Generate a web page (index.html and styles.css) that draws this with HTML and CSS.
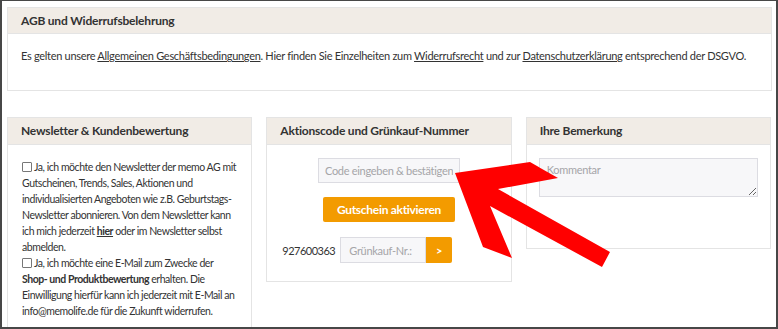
FILE: index.html
```html
<!DOCTYPE html>
<html lang="de">
<head>
  <meta charset="UTF-8">
  <title>Checkout – AGB und Bemerkungen</title>
  <link rel="stylesheet" href="styles.css">
</head>
<body>
  <div class="frame">

    <!-- AGB -->
    <div class="box box-wide">
      <div class="box-head">AGB und Widerrufsbelehrung</div>
      <div class="box-body agb-body">
        Es gelten unsere <a href="#">Allgemeinen Geschäftsbedingungen</a>. Hier finden Sie Einzelheiten zum <a href="#">Widerrufsrecht</a> und zur <a href="#">Datenschutzerklärung</a> entsprechend der DSGVO.
      </div>
    </div>

    <div class="row">
      <!-- Newsletter -->
      <div class="box">
        <div class="box-head">Newsletter &amp; Kundenbewertung</div>
        <div class="box-body news-body">
          <label><span class="check"></span> Ja, ich möchte den Newsletter der memo AG mit Gutscheinen, Trends, Sales, Aktionen und individualisierten Angeboten wie z.B. Geburtstags-Newsletter abonnieren. Von dem Newsletter kann ich mich jederzeit <a href="#"><b>hier</b></a> oder im Newsletter selbst abmelden.</label>
          <label><span class="check"></span> Ja, ich möchte eine E-Mail zum Zwecke der <b class="nowrap">Shop- und Produktbewertung</b> erhalten. Die Einwilligung hierfür kann ich jederzeit mit E-Mail an info@memolife.de für die Zukunft widerrufen.</label>
        </div>
      </div>

      <!-- Aktionscode -->
      <div class="box">
        <div class="box-head">Aktionscode und Grünkauf-Nummer</div>
        <div class="box-body code-body">
          <input class="field code-field" type="text" placeholder="Code eingeben &amp; bestätigen">
          <button class="btn btn-code">Gutschein aktivieren</button>
          <div class="gruen-row">
            <span class="kdnr">927600363</span>
            <input class="field gruen-field" type="text" placeholder="Grünkauf-Nr.:">
            <button class="btn btn-go">&gt;</button>
          </div>
        </div>
      </div>

      <!-- Bemerkung -->
      <div class="box">
        <div class="box-head">Ihre Bemerkung</div>
        <div class="box-body note-body">
          <textarea class="field note-field" placeholder="Kommentar"></textarea>
        </div>
      </div>
    </div>

    <!-- roter Hinweispfeil -->
    <svg class="arrow" width="778" height="329" viewBox="0 0 778 329">
      <polygon points="455,173 530,162 558,178 498,189 610,252 602,267 490,206 512,258 483,247" fill="#ff0000"/>
    </svg>
  </div>
</body>
</html>
```

FILE: styles.css
```css
* {
  box-sizing: border-box;
}

body {
  margin: 0;
  font-family: Lato, "Open Sans", sans-serif;
  color: #333;
  letter-spacing: -0.3px;
}

.frame {
  position: relative;
  width: 778px;
  height: 329px;
  overflow: hidden;
  border: 2px solid #474747;
  border-top-width: 1px;
  padding: 6px 5px 0 5px;
  background: #fff;
}

.box {
  border: 1px solid #e4e4e4;
  background: #fff;
}

.box-wide {
  width: 765px;
  height: 84px;
}

.box-head {
  background-color: #f1ece6;
  border-bottom: 1px solid #e4e4e4;
  font-weight: bold;
  font-size: 12px;
  height: 27px;
  line-height: 26px;
  padding-left: 13px;
  letter-spacing: -0.2px;
}

.box-wide .box-head {
  height: 26px;
  line-height: 25px;
}

.box-body {
  font-size: 11px;
}

a {
  color: #333;
}

.agb-body {
  padding: 15px 13px;
}

.row {
  display: flex;
  align-items: flex-start;
  gap: 14px;
  margin-top: 26px;
}

.row .box {
  width: 246px;
}

.news-body {
  padding: 14px 8px 12px 14px;
  font-size: 10.5px;
  letter-spacing: -0.45px;
  line-height: 16px;
}

.news-body label {
  display: block;
}

.nowrap {
  white-space: nowrap;
}

.check {
  display: inline-block;
  width: 10px;
  height: 10px;
  border: 1px solid #777;
  border-radius: 1px;
  vertical-align: -1px;
}

.code-body {
  display: flex;
  flex-direction: column;
  align-items: center;
  padding: 13px 0 18px 0;
}

.field {
  font-family: Lato, "Open Sans", sans-serif;
  font-size: 11px;
  letter-spacing: -0.3px;
  color: #333;
  background: #f7f7f9;
  border: 1px solid #dcdce2;
  border-radius: 0;
  outline: none;
}

.field::placeholder {
  color: #a5a5a8;
}

.code-field {
  width: 142px;
  height: 25px;
  padding: 0 6px;
}

.btn {
  background: #f39b00;
  color: #fff;
  border: 0;
  border-radius: 2px;
  font-family: Lato, "Open Sans", sans-serif;
  font-weight: bold;
  cursor: pointer;
}

.btn-code {
  width: 132px;
  height: 25px;
  margin-top: 14px;
  font-size: 12px;
  letter-spacing: -0.3px;
}

.gruen-row {
  align-self: flex-start;
  display: flex;
  align-items: center;
  margin-top: 15px;
  margin-left: 15px;
}

.kdnr {
  font-size: 11px;
  letter-spacing: -0.5px;
  margin-right: 5px;
}

.gruen-field {
  width: 86px;
  height: 26px;
  padding: 0 8px;
}

.btn-go {
  width: 26px;
  height: 26px;
  font-size: 11px;
  border-radius: 0 2px 2px 0;
}

.note-body {
  padding: 13px 12px 51px 12px;
}

.note-field {
  display: block;
  width: 219px;
  height: 39px;
  padding: 4px 7px;
  resize: vertical;
}

.arrow {
  position: absolute;
  left: -2px;
  top: -1px;
  pointer-events: none;
}
```
